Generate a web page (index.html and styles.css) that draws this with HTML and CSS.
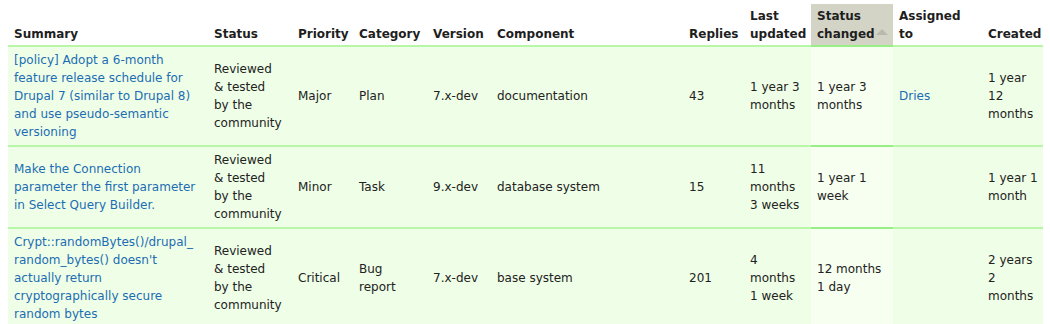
FILE: index.html
```html
<!DOCTYPE html>
<html>
<head>
<meta charset="utf-8">
<link rel="stylesheet" href="styles.css">
</head>
<body>
<table class="issues">
  <colgroup>
    <col class="c-summary"><col class="c-status"><col class="c-priority"><col class="c-category"><col class="c-version"><col class="c-component"><col class="c-replies"><col class="c-updated"><col class="c-changed"><col class="c-assigned"><col class="c-created">
  </colgroup>
  <thead>
    <tr>
      <th>Summary</th>
      <th>Status</th>
      <th>Priority</th>
      <th>Category</th>
      <th>Version</th>
      <th>Component</th>
      <th>Replies</th>
      <th>Last updated</th>
      <th class="active">Status <span class="nowrap">changed<span class="sort-arrow"></span></span></th>
      <th>Assigned to</th>
      <th class="last">Created</th>
    </tr>
  </thead>
  <tbody>
    <tr>
      <td><a href="#">[policy] Adopt a 6-month feature release schedule for Drupal 7 (similar to Drupal 8) and use pseudo-semantic versioning</a></td>
      <td>Reviewed &amp;&nbsp;tested by&nbsp;the community</td>
      <td>Major</td>
      <td>Plan</td>
      <td>7.x-dev</td>
      <td>documentation</td>
      <td>43</td>
      <td>1 year 3 months</td>
      <td class="active">1 year 3 months</td>
      <td><a href="#">Dries</a></td>
      <td class="last">1 year 12 months</td>
    </tr>
    <tr>
      <td><a href="#">Make the Connection parameter the first parameter in Select Query Builder.</a></td>
      <td>Reviewed &amp;&nbsp;tested by&nbsp;the community</td>
      <td>Minor</td>
      <td>Task</td>
      <td>9.x-dev</td>
      <td>database system</td>
      <td>15</td>
      <td>11 months 3 weeks</td>
      <td class="active">1 year 1 week</td>
      <td></td>
      <td class="last">1 year 1 month</td>
    </tr>
    <tr>
      <td><a href="#">Crypt::randomBytes()/drupal_ random_bytes() doesn't actually return cryptographically secure random bytes</a></td>
      <td>Reviewed &amp;&nbsp;tested by&nbsp;the community</td>
      <td>Critical</td>
      <td>Bug report</td>
      <td>7.x-dev</td>
      <td>base system</td>
      <td>201</td>
      <td>4 months 1 week</td>
      <td class="active">12 months 1 day</td>
      <td></td>
      <td class="last">2 years 2 months</td>
    </tr>
  </tbody>
</table>
</body>
</html>
```

FILE: styles.css
```css
body {
  margin: 0;
  padding: 4px 7px 0 8px;
  background: #fff;
  font-family: "DejaVu Sans", Verdana, sans-serif;
  font-size: 12px;
  line-height: 18px;
  color: #222;
}
.issues {
  border-collapse: collapse;
  table-layout: fixed;
  width: 1035px;
}
.c-summary { width: 200px; }
.c-status { width: 84px; }
.c-priority { width: 61px; }
.c-category { width: 74px; }
.c-version { width: 64px; }
.c-component { width: 192px; }
.c-replies { width: 61px; }
.c-updated { width: 67px; }
.c-changed { width: 82px; }
.c-assigned { width: 89px; }
.c-created { width: 61px; }

.issues th {
  text-align: left;
  vertical-align: bottom;
  font-weight: bold;
  color: #1e1e1e;
  padding: 3px 6px 2px 6px;
  border-bottom: 2px solid #b7f7a7;
}
.issues th.active {
  background: #d4d4c6;
  border-bottom-color: #98ef86;
}
.nowrap {
  white-space: nowrap;
}
.sort-arrow {
  display: inline-block;
  width: 0;
  height: 0;
  border-left: 6px solid transparent;
  border-right: 6px solid transparent;
  border-bottom: 6px solid #b9b9ae;
  margin-left: 1px;
  vertical-align: 3px;
}
.issues td {
  vertical-align: middle;
  padding: 4px 6px;
  background: #effee7;
  border-bottom: 2px solid #b7f7a7;
}
.issues td.active {
  background: #f6fff0;
  border-bottom-color: #98ef86;
}
.issues .last {
  padding-right: 0;
}
.issues tbody tr:last-child td {
  border-bottom: none;
}
.issues a {
  color: #1c6db3;
  text-decoration: none;
}
```
